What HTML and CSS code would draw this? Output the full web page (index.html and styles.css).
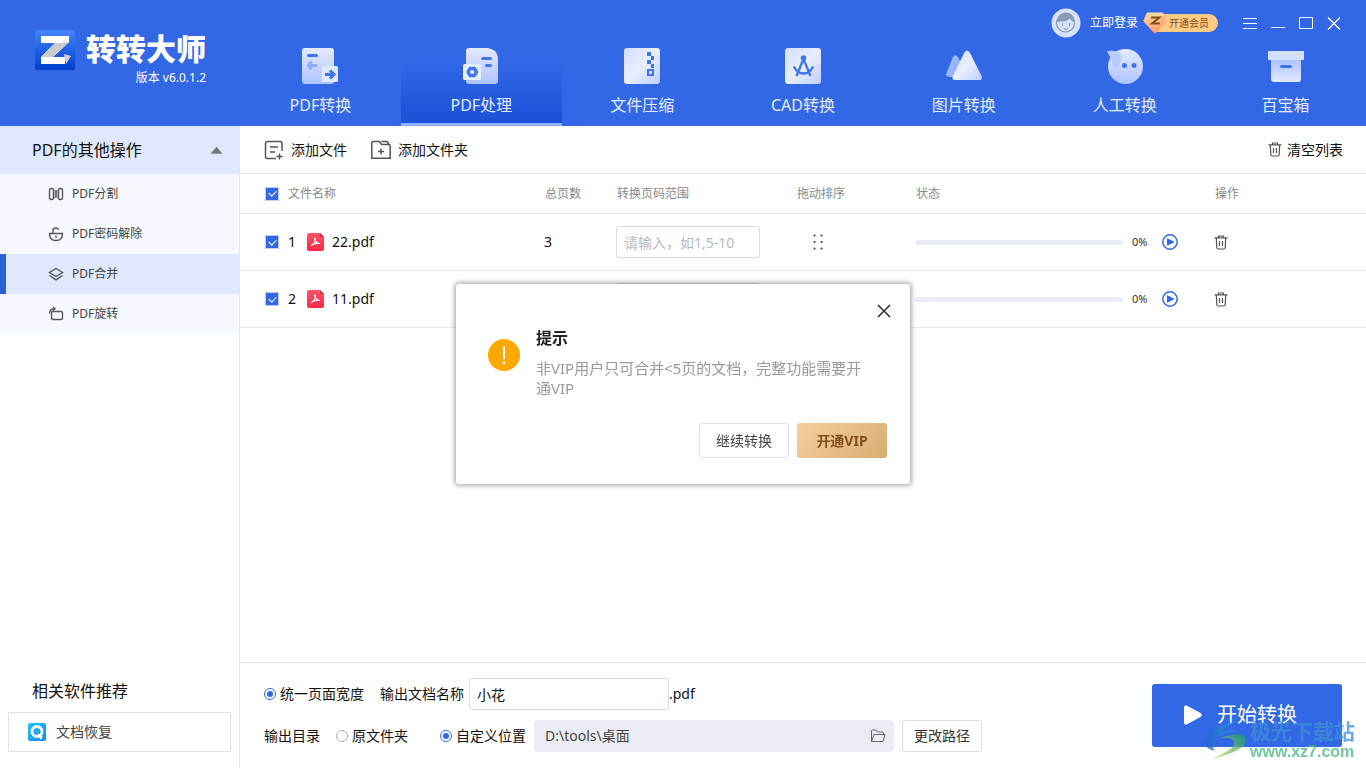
FILE: index.html
```html
<!DOCTYPE html>
<html lang="zh-CN">
<head>
<meta charset="utf-8">
<title>转转大师</title>
<link rel="stylesheet" href="styles.css">
</head>
<body>
<svg class="defs" aria-hidden="true">
  <defs>
    <linearGradient id="pale" x1="0" y1="0" x2="1" y2="1"><stop offset="0" stop-color="#d3deff"/><stop offset=".5" stop-color="#e9eeff"/><stop offset="1" stop-color="#bccdff"/></linearGradient>
    <linearGradient id="down" x1="0" y1="0" x2="0" y2="1"><stop offset="0" stop-color="#e4ebff"/><stop offset="1" stop-color="#aec3ff"/></linearGradient>
    <linearGradient id="up" x1="0" y1="0" x2="0" y2="1"><stop offset="0" stop-color="#aec3ff"/><stop offset="1" stop-color="#e4ebff"/></linearGradient>
    <linearGradient id="logo" x1="0" y1="0" x2="0" y2="1"><stop offset="0" stop-color="#4585ff"/><stop offset="1" stop-color="#003fcc"/></linearGradient>
    <linearGradient id="gem" x1="0" y1="0" x2="0" y2="1"><stop offset="0" stop-color="#ffdca8"/><stop offset="1" stop-color="#ff9a68"/></linearGradient>
    <linearGradient id="red" x1="0" y1="0" x2="0" y2="1"><stop offset="0" stop-color="#ff5468"/><stop offset="1" stop-color="#fb2848"/></linearGradient>
    <linearGradient id="cyan" x1="0" y1="0" x2="1" y2="1"><stop offset="0" stop-color="#22c8fb"/><stop offset="1" stop-color="#1683f5"/></linearGradient>
    <linearGradient id="swoosh" x1="0" y1="0" x2="1" y2="0"><stop offset="0" stop-color="#2464c8"/><stop offset="1" stop-color="#28a7d8"/></linearGradient>
    <linearGradient id="leaf" x1="0" y1="1" x2="1" y2="0"><stop offset="0" stop-color="#d9dc62"/><stop offset="1" stop-color="#149a70"/></linearGradient>
  </defs>
  <symbol id="trash" viewBox="0 0 14 15"><path d="M.5 2.800h13M4.500 2.500V1h5v1.500M2.300 3l.5 9.500q.1 1.500 1.500 1.500h5.400q1.400 0 1.500-1.500l.5-9.500M5.500 6v5M8.500 6v5" fill="none" stroke="#555" stroke-width="1.200"/></symbol>
  <symbol id="pdf" viewBox="0 0 18 18"><path d="M2 0h11l4 4v12a2 2 0 0 1-2 2H2a2 2 0 0 1-2-2V2a2 2 0 0 1 2-2z" fill="url(#red)"/><path d="M13 0l4 4h-3a1 1 0 0 1-1-1z" fill="#d82b44"/><path d="M4.500 12.500c2-1 4-4 3.800-7-.1-.7-.9-.5-.7.300.5 2.400 2 4.200 4.900 4.700M4.500 12.500c.8-1.400 4-2.500 8-2" fill="none" stroke="#fff" stroke-width="1.200" stroke-linecap="round"/></symbol>
  <symbol id="play" viewBox="0 0 16 16"><circle cx="8" cy="8" r="7.200" fill="none" stroke="#3268e6" stroke-width="1.500"/><path d="M5 5v6q0 .8.800.4l6-2.800q.7-.6 0-1.200l-6-2.800q-.8-.4-.8.4z" fill="#3268e6"/></symbol>
  <symbol id="dots" viewBox="0 0 10 16"><g fill="#444"><circle cx="1.500" cy="1.500" r="1.100"/><circle cx="8.500" cy="1.500" r="1.100"/><circle cx="1.500" cy="8" r="1.100"/><circle cx="8.500" cy="8" r="1.100"/><circle cx="1.500" cy="14.500" r="1.100"/><circle cx="8.500" cy="14.500" r="1.100"/></g></symbol>
</svg>

<header class="header">
  <div class="brand">
    <svg class="brand-mark" viewBox="0 0 40 40" aria-hidden="true"><rect width="40" height="40" rx="2" fill="url(#logo)"/><path d="M6 6h28v6L18 27h12v7H6v-7l14-14H6z" fill="#fff"/><path d="M34 12L18 27H6l14-14z" fill="#ccc"/><path d="M20 13l14-1v-1H24z" fill="#fff"/><path d="M29 24l7 2-5 8z" fill="#d2d2d2"/></svg>
    <div class="brand-text">
      <strong class="brand-name">转转大师</strong>
      <span class="brand-version">版本 v6.0.1.2</span>
    </div>
  </div>
  <div class="header-main">
    <div class="topbar">
      <button class="login">
        <svg class="avatar" viewBox="0 0 30 30" aria-hidden="true"><circle cx="15" cy="15" r="14.500" fill="#d7e2fb"/><circle cx="14.500" cy="15" r="9" fill="none" stroke="#8c9bb5" stroke-width="1.200"/><path d="M6 14c0-6 4-9.500 9-9.500s9 4 9 10c-2-.5-4-2-5-4-2 2.500-7 3.500-10 3-1.500 0-2 .5-3 .5z" fill="#8c9bb5"/><path d="M11.500 15v3M18.500 15v3M13 20.500q2 1.500 4 0" stroke="#8c9bb5" stroke-width="1.100" fill="none"/></svg>
        立即登录
      </button>
      <button class="vip-badge">
        <svg class="vip-gem" viewBox="0 0 24 22" aria-hidden="true"><path d="M5 0.500h14q1 0 1.500.8l3 7q.3.800-.3 1.500l-10 11q-1.200 1-2.400 0L.8 9.800q-.6-.7-.2-1.500l3-7Q4 .5 5 .5z" fill="url(#gem)"/><path d="M20.500 2l3 6.500-11.500 13 5-12z" fill="#ff9a68" opacity=".45"/><path d="M8 5.500h8.500L9 11.500h8" fill="none" stroke="#814d18" stroke-width="2"/></svg>
        <span>开通会员</span>
      </button>
      <div class="window-buttons">
        <button aria-label="菜单"><svg viewBox="0 0 14 14"><path d="M0 2.500h14M0 7.500h14M0 12.500h14"/></svg></button>
        <button aria-label="最小化"><svg viewBox="0 0 14 14"><path d="M0 11.500h14"/></svg></button>
        <button aria-label="最大化"><svg viewBox="0 0 14 14"><path d="M.5 1.500h13v11H.5z"/></svg></button>
        <button aria-label="关闭"><svg viewBox="0 0 14 14"><path d="M1 1.500l12 12M13 1.500l-12 12" stroke-width="1.300"/></svg></button>
      </div>
    </div>
    <nav class="nav">
      <a class="nav-item" href="#"><svg viewBox="0 0 36 36" aria-hidden="true"><rect width="32" height="36" rx="3" fill="url(#down)"/><path d="M6.500 7.500h8" stroke="#3f74ee" stroke-width="3" stroke-linecap="round"/><path d="M9.500 13.500L6.500 17.500l3 4M7 17.500h8" fill="none" stroke="#8eabff" stroke-width="3"/><rect x="20" y="18" width="16" height="16" rx="1.500" fill="#dfe9ff"/><path d="M23 26.500h8M28 22.500l4 4-4 4" fill="none" stroke="#3f74ee" stroke-width="3"/></svg>PDF转换</a>
      <a class="nav-item active" href="#" aria-current="page"><svg viewBox="0 0 36 36" aria-hidden="true"><path d="M6 0h18q11 1 11 12v21q0 3-3 3H6q-3 0-3-3V3q0-3 3-3z" fill="url(#down)"/><path d="M19.500 10.500h8M23.500 17.500h4" stroke="#3f74ee" stroke-width="3" stroke-linecap="round"/><rect y="16" width="18" height="16" rx="1.500" fill="#e8eeff"/><path d="M7 20.500h4.500l2 3.500-2 3.500H7L5 24z" fill="none" stroke="#4177ef" stroke-width="3.500" stroke-linejoin="round"/></svg>PDF处理</a>
      <a class="nav-item" href="#"><svg viewBox="0 0 36 36" aria-hidden="true"><rect width="36" height="36" rx="3" fill="url(#pale)"/><path d="M23 4h4v4h-4zM27 8h3v4h-3zM23 12h4v4h-4zM27 16h3v4h-3z" fill="#3f74ee"/><path d="M24 22h5v5h-5z" fill="none" stroke="#3f74ee" stroke-width="2"/></svg>文件压缩</a>
      <a class="nav-item" href="#"><svg viewBox="0 0 36 36" aria-hidden="true"><rect width="36" height="36" rx="3" fill="url(#pale)"/><circle cx="18.500" cy="10" r="2.800" fill="#3f74ee"/><path d="M18.500 11l-7 17M18.500 11l7 17M9 18.500q3 7 9.500 7t9.500-7" fill="none" stroke="#3f74ee" stroke-width="2.300"/></svg>CAD转换</a>
      <a class="nav-item" href="#"><svg viewBox="0 0 36 36" aria-hidden="true"><path d="M7 9q2-3.500 5 0l4 8-6 12H3q-4-.5-2.500-4z" fill="#9ab4ff"/><path d="M18 5q3-5 6 0l11.500 23q1.500 4-2.500 4H10q-5 0-3-4z" fill="url(#pale)"/></svg>图片转换</a>
      <a class="nav-item" href="#"><svg viewBox="0 0 36 36" aria-hidden="true"><circle cx="18.500" cy="18.500" r="17.500" fill="url(#down)"/><path d="M0 3q9-1 13 2 4 7-2 14-3 2-4 0L3 9z" fill="#b9ccff"/><circle cx="17.500" cy="17.500" r="2.500" fill="#3f74ee"/><circle cx="27" cy="17.500" r="2.500" fill="#3f74ee"/></svg>人工转换</a>
      <a class="nav-item" href="#"><svg viewBox="0 0 36 36" aria-hidden="true"><path d="M3 12h30v19q0 3-3 3H6q-3 0-3-3z" fill="url(#up)"/><path d="M0 3h36v9H0z" fill="#d3dfff"/><path d="M13.500 18.500h9" stroke="#3f74ee" stroke-width="3" stroke-linecap="round"/></svg>百宝箱</a>
    </nav>
  </div>
</header>

<div class="workspace">
  <aside class="sidebar">
    <button class="group-head" aria-expanded="true">PDF的其他操作 <svg viewBox="0 0 12 8" aria-hidden="true"><path d="M6 .5L11.500 7H.5z" fill="#777"/></svg></button>
    <nav class="group-items">
      <a href="#"><svg viewBox="0 0 16 16" aria-hidden="true"><rect x="1.500" y="2.500" width="4" height="11" rx="1.500"/><rect x="10.500" y="2.500" width="4" height="11" rx="1.500"/><path d="M8 4v8" stroke-width="3" opacity=".75"/></svg>PDF分割</a>
      <a href="#"><svg viewBox="0 0 16 16" aria-hidden="true"><path d="M1.500 7.500h13q0 7-6.500 7t-6.500-7zM5 7V4.500Q5 2 8 2q2 0 2.500 1.800M8 9.500v2.500"/></svg>PDF密码解除</a>
      <a class="active" href="#" aria-current="page"><svg viewBox="0 0 16 16" aria-hidden="true"><path d="M8 2.500l6.500 4L8 10.500l-6.500-4zM1.500 9.500L8 13.800l6.500-4.300"/></svg>PDF合并</a>
      <a href="#"><svg viewBox="0 0 16 16" aria-hidden="true"><rect x="3.500" y="5.500" width="11" height="8" rx="1.500"/><path d="M1.500 7.500Q1.500 3 6.500 2.700M5 1l2 1.700-2 1.800"/></svg>PDF旋转</a>
    </nav>
    <section class="related">
      <h2>相关软件推荐</h2>
      <a class="related-link" href="#"><svg viewBox="0 0 18 18" aria-hidden="true"><rect width="18" height="18" rx="2" fill="url(#cyan)"/><circle cx="9" cy="8.500" r="5" fill="none" stroke="#fff" stroke-width="2.800"/><path d="M9.500 10l5.500 4-2.500 3z" fill="#fff"/></svg>文档恢复</a>
    </section>
  </aside>

  <main class="content">
    <div class="toolbar">
      <button class="tool"><svg class="ic-file" viewBox="0 0 20 20" aria-hidden="true"><path d="M18 11V3.500Q18 1.500 16 1.500H3.500q-2 0-2 2v13q0 2 2 2H12M6 7h8M6 12h5M15.500 13.500v6M12.500 16.500h6"/></svg>添加文件</button>
      <button class="tool"><svg class="ic-folder" viewBox="0 0 20 20" aria-hidden="true"><path d="M.8 18.200V2.500Q.8 1.500 2 1.500h6.500l2 3h7.500q1.200 0 1.200 1.200v12.500zM10.500 1.500h5.500l2 3M10 8.500v6M7 11.500h6"/></svg>添加文件夹</button>
      <button class="tool clear"><svg class="ic-trash" aria-hidden="true"><use href="#trash"/></svg>清空列表</button>
    </div>

    <table class="files">
      <colgroup><col><col class="c-pages"><col class="c-range"><col class="c-drag"><col class="c-status"><col class="c-ops"></colgroup>
      <thead>
        <tr>
          <th><label class="name-cell"><input type="checkbox" class="check" checked>文件名称</label></th>
          <th>总页数</th><th>转换页码范围</th><th>拖动排序</th><th>状态</th><th>操作</th>
        </tr>
      </thead>
      <tbody>
        <tr>
          <td><label class="name-cell"><input type="checkbox" class="check" checked><span class="num">1</span><svg class="ic-pdf" aria-hidden="true"><use href="#pdf"/></svg>22.pdf</label></td>
          <td>3</td>
          <td><input class="field range" type="text" placeholder="请输入，如1,5-10" aria-label="转换页码范围"></td>
          <td><button class="icon-button drag" aria-label="拖动排序"><svg class="ic-dots"><use href="#dots"/></svg></button></td>
          <td><div class="status"><div class="bar" role="progressbar" aria-valuenow="0" aria-label="进度"></div><span class="percent">0%</span><button class="icon-button" aria-label="开始"><svg class="ic-play"><use href="#play"/></svg></button></div></td>
          <td><button class="icon-button" aria-label="删除"><svg class="ic-trash"><use href="#trash"/></svg></button></td>
        </tr>
        <tr>
          <td><label class="name-cell"><input type="checkbox" class="check" checked><span class="num">2</span><svg class="ic-pdf" aria-hidden="true"><use href="#pdf"/></svg>11.pdf</label></td>
          <td></td>
          <td><input class="field range" type="text" aria-label="转换页码范围"></td>
          <td></td>
          <td><div class="status"><div class="bar" role="progressbar" aria-valuenow="0" aria-label="进度"></div><span class="percent">0%</span><button class="icon-button" aria-label="开始"><svg class="ic-play"><use href="#play"/></svg></button></div></td>
          <td><button class="icon-button" aria-label="删除"><svg class="ic-trash"><use href="#trash"/></svg></button></td>
        </tr>
      </tbody>
    </table>

    <footer class="output">
      <div class="options">
        <div class="option-row">
          <label class="choice"><input type="radio" class="radio" name="width" checked>统一页面宽度</label>
          <div class="doc-name"><label for="doc-name">输出文档名称</label><input id="doc-name" class="field" type="text" value="小花"><span>.pdf</span></div>
        </div>
        <div class="option-row">
          <span>输出目录</span>
          <label class="choice source"><input type="radio" class="radio" name="dir">原文件夹</label>
          <div class="location">
            <label class="choice"><input type="radio" class="radio" name="dir" checked>自定义位置</label>
            <div class="path"><input type="text" value="D:\tools\桌面" aria-label="输出路径" readonly><svg class="ic-open" viewBox="0 0 16 14" aria-hidden="true"><path d="M1.500 12.500V2q0-1 1-1h3.500l1.500 2h5q1 0 1 1v1.500M1.500 12.500L4 5.500h11l-2 7z"/></svg></div>
            <button class="change">更改路径</button>
          </div>
        </div>
      </div>
      <button class="start"><svg viewBox="0 0 18 20" aria-hidden="true"><path d="M0 3q0-4 3.500-2L16.500 8q2.500 2 0 4L3.500 19Q0 21 0 17z" fill="#fff"/></svg>开始转换</button>
    </footer>
  </main>
</div>

<div class="modal" role="dialog" aria-labelledby="modal-title">
  <button class="modal-close" aria-label="关闭"><svg viewBox="0 0 14 14"><path d="M1 1l12 12M13 1L1 13" stroke="#333" stroke-width="1.600"/></svg></button>
  <div class="modal-body">
    <svg class="modal-icon" viewBox="0 0 32 32" aria-hidden="true"><circle cx="16" cy="16" r="16" fill="#ffa800"/><path d="M16 8v11.500" stroke="#fff" stroke-width="2" stroke-linecap="round"/><circle cx="16" cy="23.800" r="1.400" fill="#fff"/></svg>
    <div>
      <h1 id="modal-title">提示</h1>
      <p>非VIP用户只可合并&lt;5页的文档，完整功能需要开通VIP</p>
    </div>
  </div>
  <div class="modal-actions">
    <button class="modal-button">继续转换</button>
    <button class="modal-button gold">开通VIP</button>
  </div>
</div>

<div class="watermark">
  <svg viewBox="0 0 42 40" aria-hidden="true"><path d="M34 1Q8 4 1 20q-3 9 9 11Q4 24 12 17q6-5 22-6-14-1-18 2Q20 5 34 1z" fill="url(#swoosh)"/><path d="M15 18q24-8 26 1 1 12-35 20 25-10 23-17-1-5-14-4z" fill="url(#leaf)"/></svg>
  <div class="watermark-text"><span class="watermark-name">极光下载站</span><span class="watermark-url">www.xz7.com</span></div>
</div>
</body>
</html>
```

FILE: styles.css
```css
* { box-sizing: border-box; }

body {
  margin: 0;
  height: 100vh;
  display: flex;
  flex-direction: column;
  overflow: hidden;
  background: #fff;
  color: #111;
  font: 14px/20px "Noto Sans", "Noto Sans CJK SC", sans-serif;
}

button, input { font: inherit; color: inherit; }
button { padding: 0; border: 0; background: none; white-space: nowrap; cursor: pointer; }
a { color: inherit; text-decoration: none; }
svg { display: block; flex: none; }
h1, h2, p { margin: 0; }
.defs { position: absolute; width: 0; height: 0; }

/* Header */
.header { display: flex; background: #3268e6; color: #fff; }
.brand { flex: none; width: 240px; padding: 30px 0 0 35px; display: flex; gap: 11px; }
.brand-mark { width: 40px; height: 40px; }
.brand-text { display: flex; flex-direction: column; align-items: flex-end; }
.brand-name { font-size: 30px; line-height: 38px; font-weight: 900; }
.brand-version { font-size: 12px; }
.header-main { flex: 1; min-width: 0; }
.topbar { height: 46px; padding-right: 25px; display: flex; align-items: center; justify-content: flex-end; }
.login { display: flex; align-items: center; gap: 9px; font-size: 12px; }
.avatar { width: 30px; height: 30px; }
.vip-badge {
  display: flex; align-items: center;
  height: 18px; margin-left: 11px; padding-right: 9px;
  border-radius: 9px; background: #ffca82; color: #814d18; font-size: 10px;
}
.vip-gem { width: 24px; height: 22px; margin-left: -6px; margin-right: 2px; }
.window-buttons { display: flex; gap: 14px; margin-left: 25px; }
.window-buttons svg { width: 14px; height: 14px; fill: none; stroke: #fff; }
.nav { display: flex; height: 80px; }
.nav-item {
  flex: 1; display: flex; flex-direction: column; align-items: center; gap: 11px;
  padding-top: 2px; border-bottom: 3px solid transparent;
  font-size: 16px; color: #e4ecff;
}
.nav-item svg { width: 36px; height: 36px; }
.nav-item.active { background: linear-gradient(#3268e6 20%, #1c50d6); border-bottom-color: #8fb0ff; background-clip: padding-box; }

.workspace { flex: 1; min-height: 0; display: flex; }

/* Sidebar */
.sidebar { flex: none; width: 240px; display: flex; flex-direction: column; border-right: 1px solid #e0e8ff; }
.group-head {
  height: 48px; padding: 0 16px 0 32px;
  display: flex; align-items: center; justify-content: space-between;
  background: #e0e8ff; font-size: 16px;
}
.group-head svg { width: 13px; height: 9px; }
.group-items { background: #f5f8ff; font-size: 12px; color: #444; }
.group-items a { height: 40px; padding-left: 48px; display: flex; align-items: center; gap: 8px; }
.group-items svg { width: 16px; height: 16px; fill: none; stroke: #555; stroke-width: 1.4; }
.group-items .active { background: #e0e8ff; border-left: 6px solid #2c5fd6; padding-left: 42px; }
.related { margin-top: auto; padding: 0 8px 16px; }
.related h2 { padding-left: 24px; margin-bottom: 10px; font-size: 16px; font-weight: 400; line-height: 22px; }
.related-link {
  height: 40px; padding-left: 19px; display: flex; align-items: center; gap: 10px;
  border: 1px solid #e2e2e2; color: #444;
}
.related-link svg { width: 18px; height: 18px; }

/* File list */
.content { flex: 1; min-width: 0; display: flex; flex-direction: column; }
.toolbar {
  height: 48px; padding: 0 23px 0 24px; display: flex; align-items: center; gap: 24px;
  border-bottom: 1px solid #e0e8ff;
}
.tool { display: flex; align-items: center; gap: 7px; }
.tool svg { fill: none; stroke: #555; stroke-width: 1.5; }
.clear { margin-left: auto; gap: 5px; }
.ic-file, .ic-folder { width: 20px; height: 20px; }
.ic-trash { width: 14px; height: 15px; }
.ic-pdf { width: 18px; height: 18px; margin-right: 7px; }
.ic-play { width: 16px; height: 16px; }
.ic-dots { width: 10px; height: 16px; }

.files { width: 100%; table-layout: fixed; border-collapse: separate; border-spacing: 0; }
.c-pages { width: 72px; }
.c-range { width: 180px; }
.c-drag { width: 119px; }
.c-status { width: 299px; }
.c-ops { width: 152px; }
.files th, .files td { border-bottom: 1px solid #e8e8e8; }
.files th { height: 40px; padding: 0 0 0 1px; text-align: left; font-size: 12px; font-weight: 400; color: #888; }
.files td { height: 57px; padding: 0; vertical-align: middle; }
.files th:first-child, .files td:first-child { padding-left: 25px; }
.name-cell { display: flex; align-items: center; }
.num { width: 19px; }
.check {
  appearance: none; flex: none; width: 14px; height: 14px; margin: 0 9px 0 0;
  display: grid; place-items: center; border: 1px solid #bed0fa; background: #3268e6;
}
.check::after { content: ""; width: 6px; height: 4px; border: solid #fff; border-width: 0 0 1px 1px; transform: translateY(-1px) rotate(-45deg); }
.field { height: 32px; padding: 0 7px; border: 1px solid #dcdcdc; border-radius: 3px; background: #fff; outline: 0; }
.range { display: block; width: 144px; }
.range::placeholder { color: #b4bac4; opacity: 1; }
.icon-button { display: block; }
.drag { margin-left: 17px; }
.status { display: flex; align-items: center; padding-right: 36px; }
.bar { flex: 1; height: 5px; border-radius: 3px; background: #ebedf6; }
.percent { width: 30px; margin-left: 9px; font-size: 11px; color: #333; }

/* Output settings */
.output {
  margin-top: auto; padding: 15px 24px 16px; display: flex; align-items: center; justify-content: space-between;
  border-top: 1px solid #e2e2e2;
}
.options { display: flex; flex-direction: column; gap: 10px; }
.option-row { display: flex; align-items: center; gap: 16px; height: 32px; }
.choice { display: flex; align-items: center; gap: 4px; }
.radio {
  appearance: none; width: 12px; height: 12px; margin: 0; display: grid; place-items: center;
  border: 1px solid #aaa; border-radius: 50%;
}
.radio:checked { border-color: #3268e6; }
.radio:checked::after { content: ""; width: 6px; height: 6px; border-radius: 50%; background: #3268e6; }
.doc-name { display: flex; align-items: center; }
.doc-name .field { width: 200px; margin-left: 5px; }
.source { margin-right: 16px; }
.location { display: flex; align-items: center; gap: 8px; }
.path {
  width: 360px; height: 32px; padding: 0 8px 0 11px; display: flex; align-items: center;
  border-radius: 4px; background: #ebedf6; color: #444;
}
.path input { flex: 1; min-width: 0; padding: 0; border: 0; background: none; outline: 0; }
.ic-open { width: 16px; height: 14px; fill: none; stroke: #666; }
.change { width: 80px; height: 32px; border: 1px solid #dcdcdc; border-radius: 3px; color: #333; }
.start {
  width: 190px; height: 63px; padding-left: 32px; display: flex; align-items: center; gap: 15px;
  border-radius: 3px; background: #3268e6; color: #fff; font-size: 20px;
}
.start svg { width: 18px; height: 20px; }

/* Upgrade prompt */
.modal {
  position: fixed; inset: 0; margin: auto; width: 454px; height: 200px;
  padding: 20px 23px 26px 32px;
  display: flex; flex-direction: column;
  border-radius: 3px; background: #fff; box-shadow: 0 0 4px 2px rgba(0, 0, 0, .3);
}
.modal-close { align-self: flex-end; margin-right: -4px; }
.modal-close svg { width: 14px; height: 14px; }
.modal-body { display: flex; gap: 16px; padding: 10px 16px 0 0; }
.modal-icon { width: 32px; height: 32px; margin-top: 11px; }
.modal h1 { font-size: 16px; line-height: 20px; margin-bottom: 10px; color: #222; }
.modal p { font-size: 15px; line-height: 20px; color: #999; }
.modal-actions { margin-top: auto; display: flex; justify-content: flex-end; gap: 8px; }
.modal-button { width: 90px; height: 35px; border: 1px solid #e2e2e2; border-radius: 3px; color: #444; }
.gold { border: 0; background: linear-gradient(135deg, #f6cf9d, #d8ad72); color: #814f20; font-weight: 700; }

.watermark { position: fixed; right: 11px; bottom: 7px; display: flex; align-items: center; gap: 3px; pointer-events: none; opacity: .75; }
.watermark svg { width: 42px; height: 40px; }
.watermark-text { display: flex; flex-direction: column; }
.watermark-name { font-size: 21px; line-height: 24px; font-weight: 700; color: #4090d4; }
.watermark-url { font: 700 16px/18px "Liberation Sans", sans-serif; color: #3fb878; }
```
